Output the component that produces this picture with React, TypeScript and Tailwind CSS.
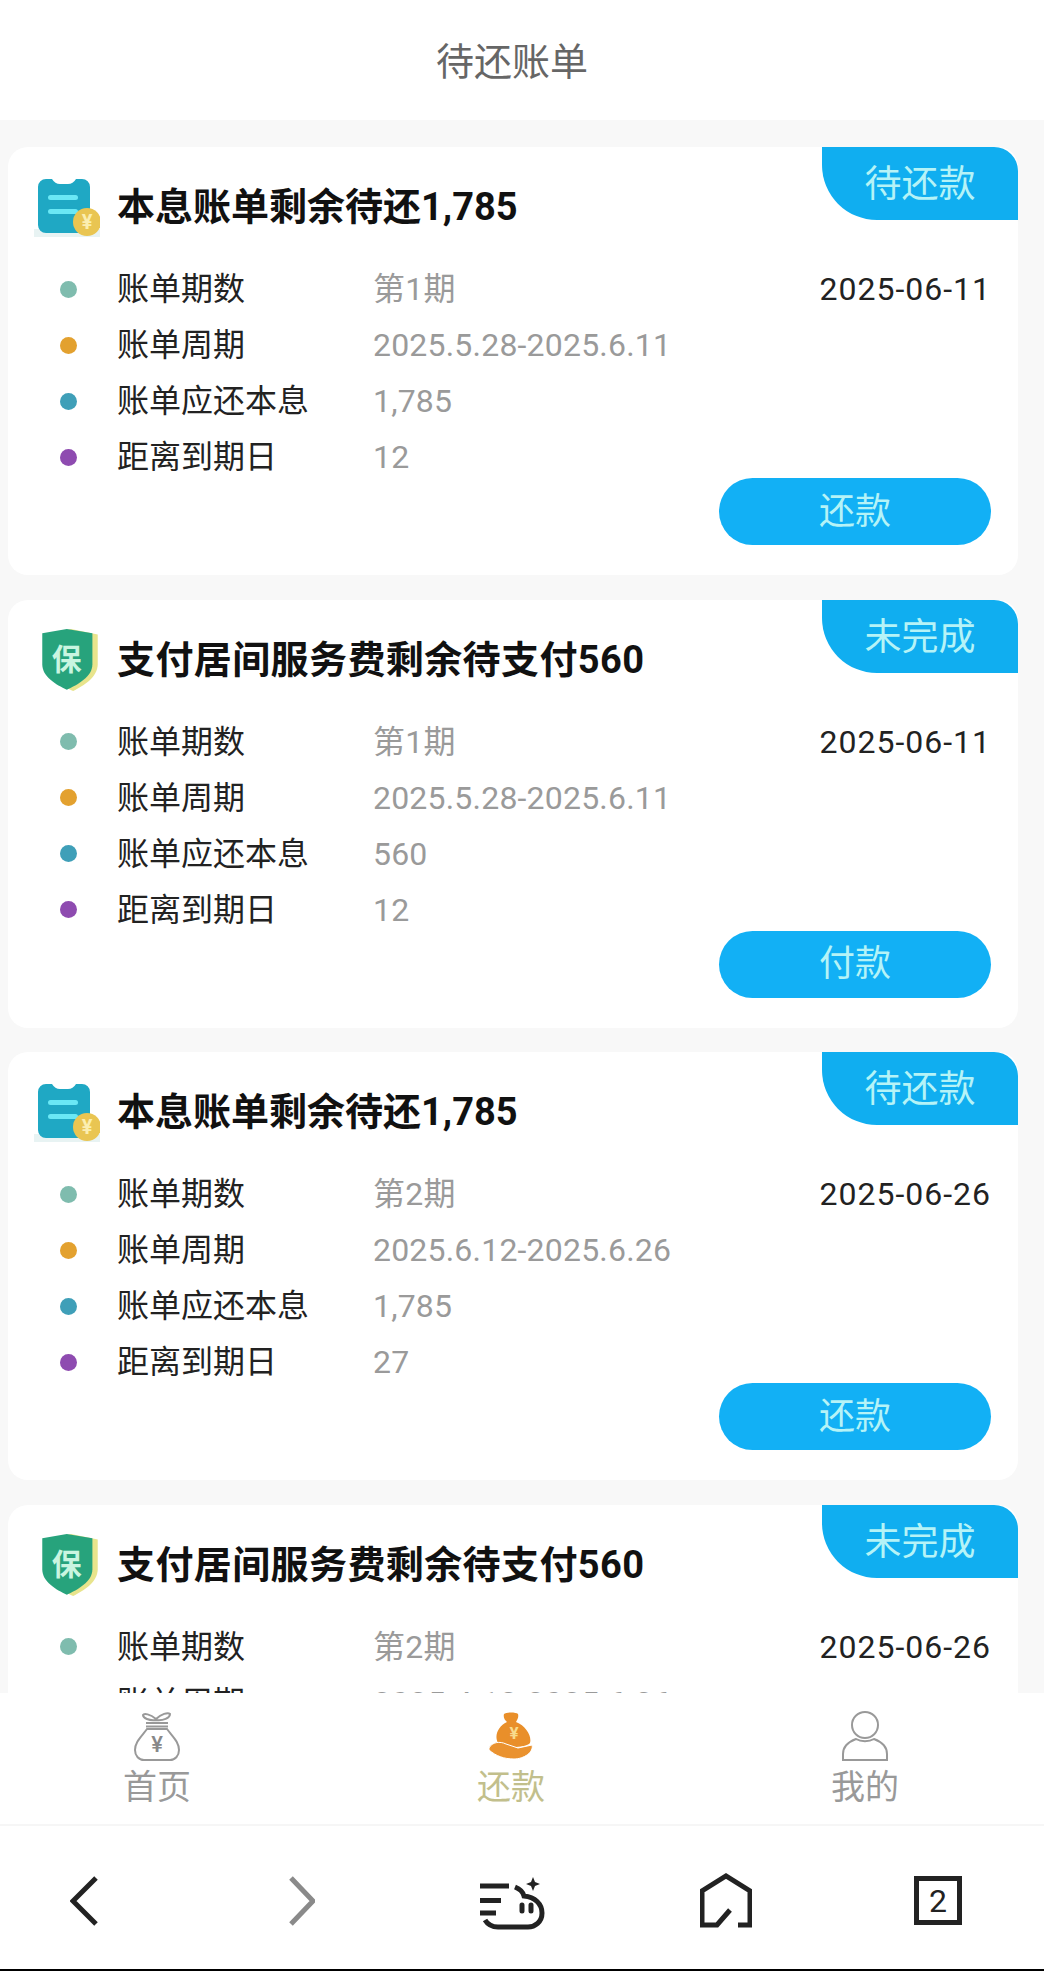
const bills = [
  { kind: 'bill', title: '本息账单剩余待还1,785', tag: '待还款', term: '第1期', date: '2025-06-11', period: '2025.5.28-2025.6.11', amount: '1,785', days: '12', action: '还款' },
  { kind: 'fee', title: '支付居间服务费剩余待支付560', tag: '未完成', term: '第1期', date: '2025-06-11', period: '2025.5.28-2025.6.11', amount: '560', days: '12', action: '付款' },
  { kind: 'bill', title: '本息账单剩余待还1,785', tag: '待还款', term: '第2期', date: '2025-06-26', period: '2025.6.12-2025.6.26', amount: '1,785', days: '27', action: '还款' },
  { kind: 'fee', title: '支付居间服务费剩余待支付560', tag: '未完成', term: '第2期', date: '2025-06-26', period: '2025.4.12-2025.6.26', amount: '560', days: '27', action: '付款' },
]

const BillIcon = () => (
  <svg width="66" height="64" viewBox="0 0 66 64">
    <rect x="0" y="54" width="66" height="8" fill="#e8f3f3" />
    <path d="M4 12 a8 8 0 0 1 8 -8 h6 q3 5 8 5 h8 q5 0 8 -5 h6 a8 8 0 0 1 8 8 v38 a8 8 0 0 1 -8 8 h-36 a8 8 0 0 1 -8 -8 z" fill="#1fa8c4" />
    <rect x="14" y="20" width="30" height="5" rx="2.5" fill="#6ae8f5" />
    <rect x="14" y="34" width="30" height="5" rx="2.5" fill="#6ae8f5" />
    <circle cx="53" cy="47" r="14" fill="#e9c552" />
    <text x="53" y="54" textAnchor="middle" fontSize="20" fontWeight="700" fill="#fbeeb0" fontFamily="Roboto, sans-serif">¥</text>
  </svg>
)

const FeeIcon = () => (
  <svg className="ml-[5px]" width="62" height="64" viewBox="0 0 58 60">
    <path d="M8 6 L30 1 L55 6 V34 C55 46 42 54 32 59 C20 54 8 46 8 34 Z" fill="#e8e48c" />
    <path d="M3 5 L26 1 L50 5 V34 C50 46 36 53 26 58 C16 53 3 46 3 34 Z" fill="#27a37c" />
    <text x="26" y="39" textAnchor="middle" fontSize="28" fontWeight="700" fill="#c9f5e0" fontFamily="'Noto Sans CJK SC', sans-serif">保</text>
  </svg>
)

const BagIcon = () => (
  <svg width="46" height="49" viewBox="0 0 46 49" fill="none" stroke="#999999" strokeWidth="2">
    <path d="M22 7 C16 2 10 1 9 3 C9 6 15 9 22 8 C29 9 36 6 36 2 C34 0 27 2 22 7 Z" />
    <path d="M12 11 H34 M12 14.500 H34" />
    <path d="M13 17 C7 25 1 30 1 38 C1 44 5 48 10 48 H36 C41 48 45 44 45 38 C45 30 39 25 33 17 Z" />
    <text x="23" y="40" textAnchor="middle" fontSize="22" fontWeight="500" fill="#888888" stroke="none" fontFamily="Roboto, sans-serif">¥</text>
  </svg>
)

const BagHandIcon = () => (
  <svg width="46" height="48" viewBox="0 0 46 48">
    <path d="M16 2 C18 0 28 0 30 2 C31 6 29 8 28 10 C38 14 44 24 42 31 C38 36 14 37 10 31 C6 24 10 14 19 10 C17 8 15 6 16 2 Z" fill="#e98f2a" />
    <text x="26" y="27" textAnchor="middle" fontSize="17" fontWeight="700" fill="#f8dc8c" fontFamily="Roboto, sans-serif">¥</text>
    <path d="M1 36 C4 30 12 29 18 32 L30 36 L44 33 C46 40 36 47 26 47 C16 47 8 44 1 38 Z" fill="#ea922f" stroke="#ffffff" strokeWidth="1" />
  </svg>
)

const PersonIcon = () => (
  <svg width="46" height="50" viewBox="0 0 46 50" fill="none" stroke="#999999" strokeWidth="2">
    <ellipse cx="23" cy="14" rx="13" ry="13" />
    <path d="M14 28 C6 31 1 36 1 43 V49 H45 V43 C45 36 40 31 32 28 C27 31 19 31 14 28 Z" />
  </svg>
)

const SparkCloudIcon = () => (
  <svg width="66" height="54" viewBox="0 0 66 54" fill="none" stroke="#222222" strokeWidth="5">
    <path d="M1 10 H30 M1 24.500 H22 M1 37 H17" />
    <path d="M36 11 C41 13 44 16 45 20 C56 21 63 28 63 37 C63 46 56 51 49 51 H19 C13 51 9 49 6 44" />
    <path d="M43 29 V35 M52 29 V35" strokeLinecap="round" />
    <path d="M54 1 L56 6 L61 8 L56 10 L54 15 L52 10 L47 8 L52 6 Z" fill="#222222" stroke="none" />
  </svg>
)

const Row = ({ dot, label, value, date }: { dot: string; label: string; value: string; date?: string }) => (
  <div className="flex h-[32px] items-center pl-[52px] pr-[27px] text-[32px] leading-[32px]">
    <div className={`h-[17px] w-[17px] rounded-full ${dot}`} />
    <div className="ml-[40px] w-[256px] text-[#222222]">{label}</div>
    <div className="flex-1 tracking-[0.2px] text-[#9a9a9a]">{value}</div>
    {date && <div className="tracking-[1px] text-[#222222]">{date}</div>}
  </div>
)

const BillCard = ({ bill }: { bill: (typeof bills)[number] }) => (
  <div className="relative mx-[8px] h-[428px] w-[1010px] shrink-0 rounded-[20px] bg-white">
    <div className="absolute right-0 top-0 flex h-[73px] w-[196px] items-center justify-center rounded-bl-[55px] rounded-tr-[24px] bg-[#10aef0] pt-[3px] text-[37px] text-[#b5f3f7]">
      {bill.tag}
    </div>
    <div className="mt-[36px] flex h-[48px] items-center pl-[26px]">
      <div className="flex w-[83px] shrink-0">{bill.kind === 'bill' ? <BillIcon /> : <FeeIcon />}</div>
      <div className={`whitespace-nowrap text-[38px] font-bold leading-[48px] text-[#111111] ${bill.kind === 'fee' ? 'tracking-[0.4px]' : ''}`}>{bill.title}</div>
    </div>
    <div className="mt-[42px] flex flex-col gap-[24px]">
      <Row dot="bg-[#7fbcae]" label="账单期数" value={bill.term} date={bill.date} />
      <Row dot="bg-[#e3a12f]" label="账单周期" value={bill.period} />
      <Row dot="bg-[#3f9fb8]" label="账单应还本息" value={bill.amount} />
      <Row dot="bg-[#8e4bb0]" label="距离到期日" value={bill.days} />
    </div>
    <div className="mt-[5px] flex justify-end pr-[27px]">
      <div className="flex h-[67px] w-[272px] items-center justify-center rounded-full bg-[#12b0f5] text-[36px] text-[#b5f3f7]">
        {bill.action}
      </div>
    </div>
  </div>
)

const Tab = ({ icon, label, color }: { icon: React.ReactNode; label: string; color: string }) => (
  <div className="flex w-[70px] flex-col items-center">
    <div className="flex h-[50px] items-center justify-center">{icon}</div>
    <div className={`mt-[8px] whitespace-nowrap text-[34px] leading-[36px] ${color}`}>{label}</div>
  </div>
)

export default function App() {
  return (
    <div className="flex h-[1971px] w-[1044px] flex-col overflow-hidden bg-white font-['Roboto','Noto_Sans_CJK_SC',sans-serif]">
      <header className="flex h-[120px] shrink-0 items-center justify-center pr-[20px] pt-[4px] text-[38px] text-[#666666]">待还账单</header>

      <main className="flex h-[1573px] shrink-0 flex-col gap-[24.5px] overflow-hidden bg-[#f8f8f8] pt-[27px]">
        {bills.map((bill, i) => (
          <BillCard key={i} bill={bill} />
        ))}
      </main>

      <nav className="flex h-[133px] shrink-0 items-start justify-between border-b-2 border-[#f6f6f6] bg-white pl-[122px] pr-[144px] pt-[18px]">
        <Tab icon={<BagIcon />} label="首页" color="text-[#999999]" />
        <Tab icon={<BagHandIcon />} label="还款" color="text-[#c2bf8c]" />
        <Tab icon={<PersonIcon />} label="我的" color="text-[#999999]" />
      </nav>

      <div className="flex flex-1 items-start border-b-2 border-black pl-[70px] pt-[50px]">
        <svg width="28" height="50" viewBox="0 0 28 50" fill="none" stroke="#222222" strokeWidth="5">
          <path d="M26 2 L3 25 L26 48" />
        </svg>
        <svg className="ml-[191px]" width="26" height="50" viewBox="0 0 26 50" fill="none" stroke="#8a8a8a" strokeWidth="5">
          <path d="M2 2 L24 25 L2 48" />
        </svg>
        <div className="ml-[164px] flex">
          <SparkCloudIcon />
        </div>
        <svg className="ml-[155px] -mt-[3px]" width="52" height="55" viewBox="0 0 52 55" fill="none" stroke="#222222" strokeWidth="5">
          <path d="M38 52 H50 V18 L26 3 L2 18 V52 H17 L30 37" />
        </svg>
        <div className="ml-[162px] flex h-[49px] w-[48px] items-center justify-center border-[5px] border-[#222222] text-[32px] leading-none text-[#222222]">
          2
        </div>
      </div>
    </div>
  )
}
